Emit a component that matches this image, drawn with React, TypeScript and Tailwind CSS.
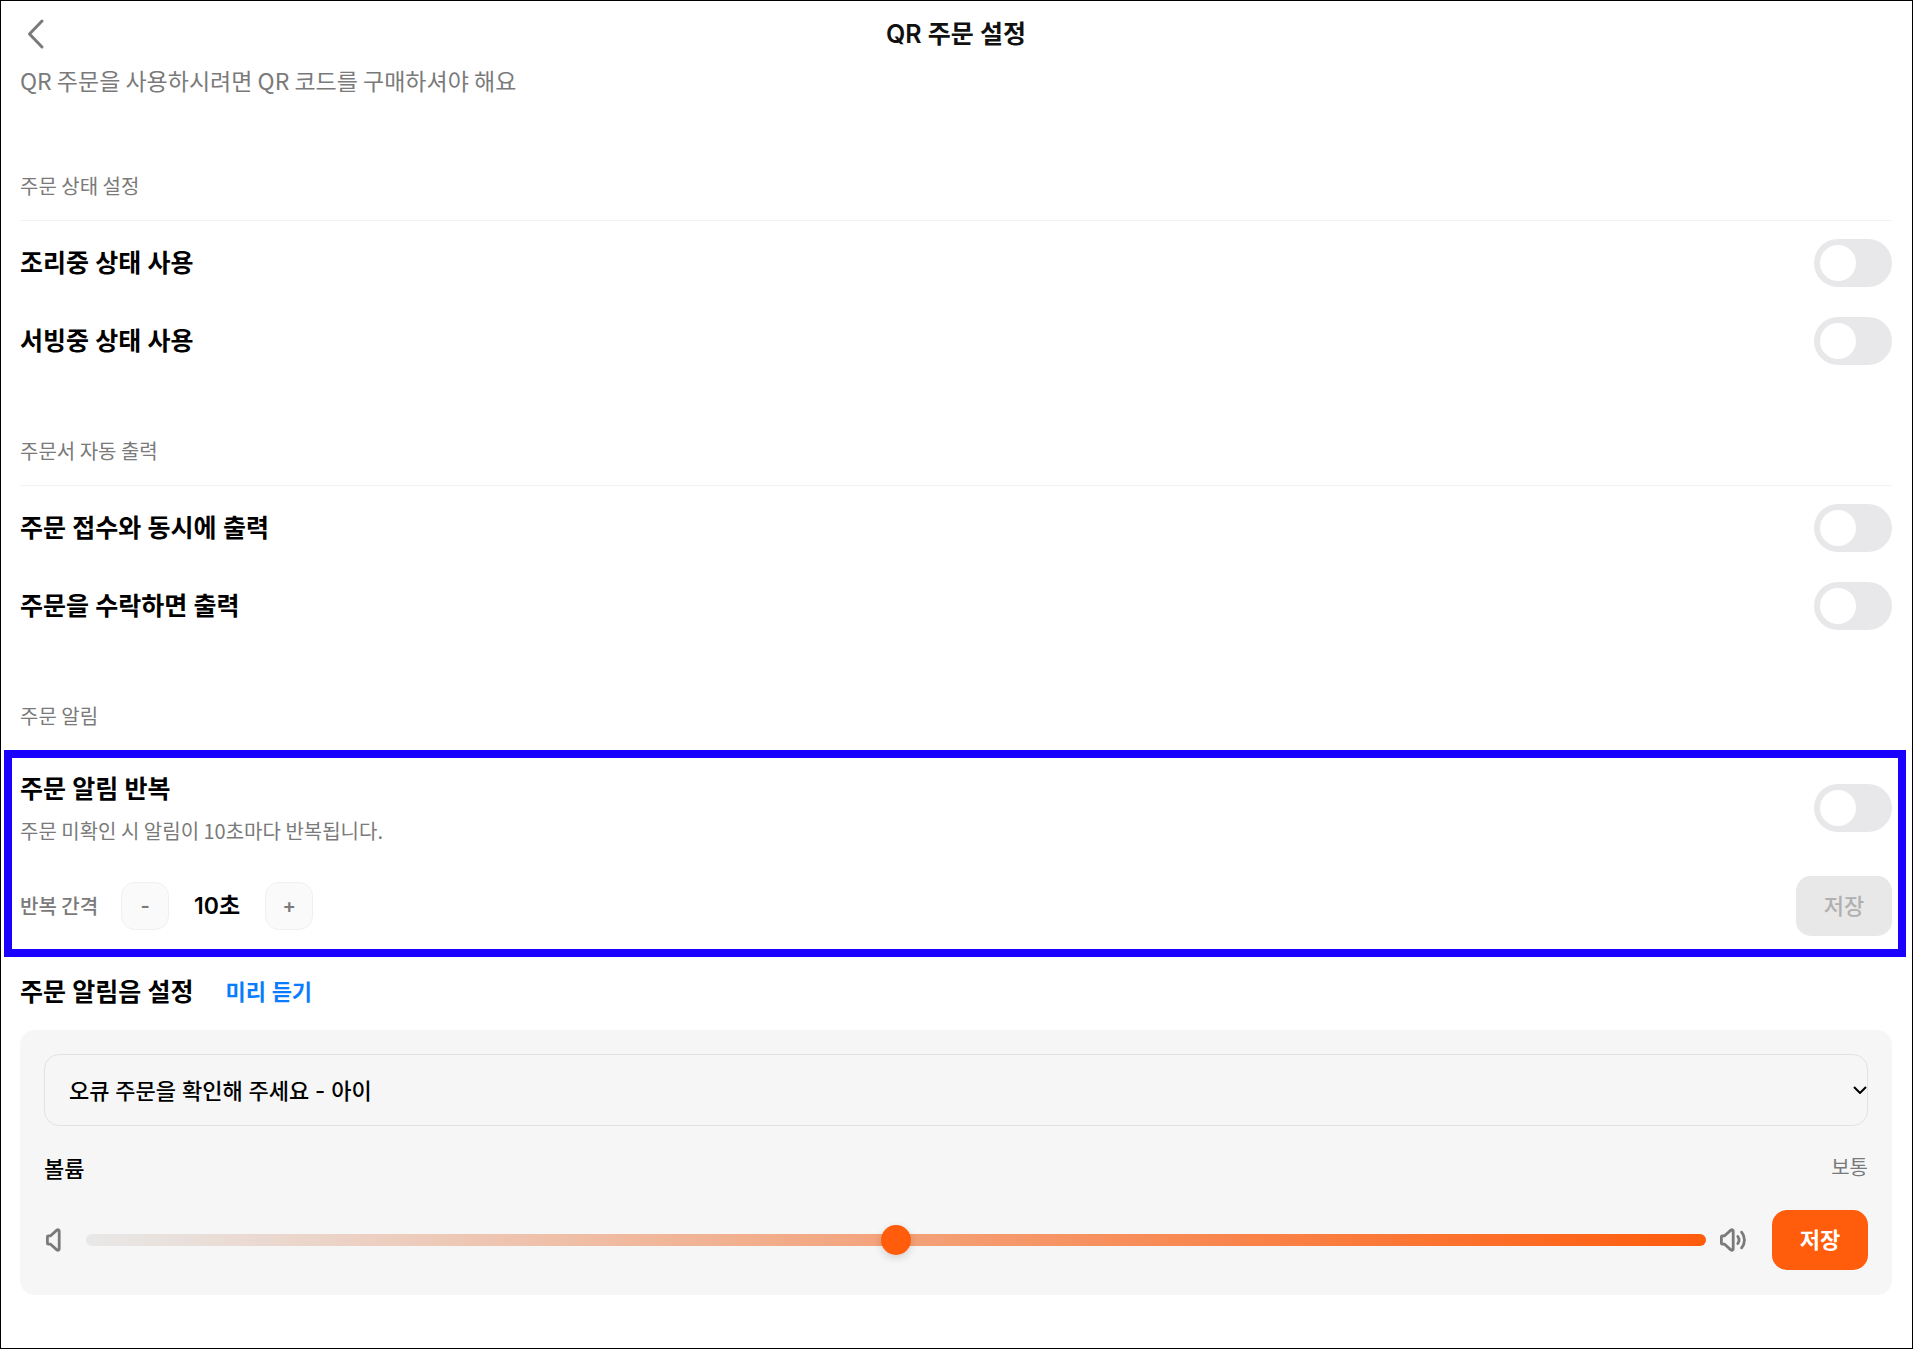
import { useState } from 'react';

interface ToggleRowProps {
  id: string;
  label: string;
}

const inter = "font-['Inter','Noto_Sans_CJK_KR',sans-serif]";

function Toggle({ id }: { id: string }) {
  return (
    <input
      id={id}
      type="checkbox"
      role="switch"
      className="h-12 w-[78px] shrink-0 cursor-pointer appearance-none rounded-full bg-[#e8e8ea] p-1.5 before:block before:size-9 before:rounded-full before:bg-white before:transition-transform checked:bg-[#ff5c0c] checked:before:translate-x-[30px]"
    />
  );
}

function ToggleRow({ id, label }: ToggleRowProps) {
  return (
    <div className="flex items-center justify-between">
      <label htmlFor={id} className={`${inter} text-[25px] leading-9 font-semibold text-black`}>
        {label}
      </label>
      <Toggle id={id} />
    </div>
  );
}

function Section({ title, rows }: { title: string; rows: ToggleRowProps[] }) {
  return (
    <section className="mb-[72px]">
      <h2 className="border-b border-[#f3f3f3] pb-5 text-xl leading-7 text-[#7a7a7a]">{title}</h2>
      <div className="flex flex-col gap-[30px] pt-[18px]">
        {rows.map((row) => (
          <ToggleRow key={row.id} {...row} />
        ))}
      </div>
    </section>
  );
}

function SpeakerIcon({ loud = false }: { loud?: boolean }) {
  return (
    <svg
      viewBox="0 0 30 30"
      className="size-[30px] shrink-0"
      fill="none"
      stroke="#7a7a7a"
      strokeWidth="2.8"
      strokeLinecap="round"
      strokeLinejoin="round"
      aria-hidden="true"
    >
      <path d="M3.4 11.8v6.400c0 .6.400 1 1 1h2.200l6.300 5.700c1 .8 2.300.4 2.300-.8V5.900c0-1.200-1.300-1.600-2.300-.8l-6.300 5.700H4.400c-.6 0-1 .4-1 1z" />
      {loud && (
        <>
          <path d="M19.800 11.500c1.600 2.200 1.600 4.800 0 7" />
          <path d="M23.600 7.200c3.800 4.600 3.800 11 0 15.600" />
        </>
      )}
    </svg>
  );
}

export default function App() {
  const [seconds, setSeconds] = useState(10);
  const [volume, setVolume] = useState(50);

  return (
    <div className="min-h-screen border border-black bg-white pr-5 pl-[19px] font-['Noto_Sans_CJK_KR',sans-serif]">
      <header className="grid h-16 grid-cols-[1fr_auto_1fr] items-center">
        <button type="button" aria-label="뒤로" className="size-9 cursor-pointer">
          <svg viewBox="0 0 36 36" className="size-9" fill="none" stroke="#7a7a7a" strokeWidth="3" strokeLinecap="round" strokeLinejoin="round">
            <path d="M22 6L9.500 19l12.500 13" />
          </svg>
        </button>
        <h1 className={`${inter} pt-0.5 text-[25px] leading-9 font-semibold text-[#111]`}>QR 주문 설정</h1>
      </header>

      <main>
        <p className="mb-[77px] text-[23px] leading-[30px] text-[#7a7a7a]">
          QR 주문을 사용하시려면 QR 코드를 구매하셔야 해요
        </p>

        <Section
          title="주문 상태 설정"
          rows={[
            { id: 'cooking', label: '조리중 상태 사용' },
            { id: 'serving', label: '서빙중 상태 사용' },
          ]}
        />
        <Section
          title="주문서 자동 출력"
          rows={[
            { id: 'print-received', label: '주문 접수와 동시에 출력' },
            { id: 'print-accepted', label: '주문을 수락하면 출력' },
          ]}
        />

        <section>
          <h2 className="pb-5 text-xl leading-7 text-[#7a7a7a]">주문 알림</h2>

          <div className="-mr-3.5 -ml-4 border-8 border-[#1a00ff] py-[13px] pr-1.5 pl-2">
            <div className="flex items-center justify-between">
              <div className="flex flex-col gap-2.5">
                <label htmlFor="repeat" className={`${inter} text-[25px] leading-9 font-semibold text-black`}>
                  주문 알림 반복
                </label>
                <p className="text-xl leading-7 text-[#7a7a7a]">주문 미확인 시 알림이 10초마다 반복됩니다.</p>
              </div>
              <Toggle id="repeat" />
            </div>

            <div className="mt-[31px] flex items-center">
              <span className="text-xl leading-7 font-medium text-[#7a7a7a]">반복 간격</span>
              <button
                type="button"
                aria-label="간격 줄이기"
                onClick={() => setSeconds(Math.max(5, seconds - 5))}
                className={`${inter} ml-[23px] size-12 cursor-pointer rounded-[14px] border border-[#f0f0f0] bg-[#fafafa] text-xl font-semibold text-[#7a7a7a]`}
              >
                -
              </button>
              <output className={`${inter} w-24 text-center text-[23px] leading-8 font-semibold text-black`}>
                {seconds}초
              </output>
              <button
                type="button"
                aria-label="간격 늘리기"
                onClick={() => setSeconds(seconds + 5)}
                className={`${inter} size-12 cursor-pointer rounded-[14px] border border-[#f0f0f0] bg-[#fafafa] text-xl font-semibold text-[#7a7a7a]`}
              >
                +
              </button>
              <button type="button" disabled className="ml-auto h-[60px] w-24 rounded-[15px] bg-[#e8e8e8] pb-1 text-[22px] font-medium text-[#b0b0b0]">
                저장
              </button>
            </div>
          </div>

          <div className="mt-[17px] flex items-center gap-8">
            <h3 className={`${inter} text-[25px] leading-9 font-semibold text-black`}>주문 알림음 설정</h3>
            <button type="button" className={`${inter} cursor-pointer text-[22px] leading-8 font-semibold text-[#0a7cff]`}>
              미리 듣기
            </button>
          </div>

          <div className="mt-5 rounded-[15px] bg-[#f6f6f6] px-6 pt-6 pb-[25px]">
            <div className="relative">
              <select
                aria-label="주문 알림음"
                className={`${inter} block h-[72px] w-full appearance-none rounded-[15px] border border-[#e2e2e2] bg-transparent pt-0.5 pr-12 pl-6 text-[22px] font-medium text-black`}
              >
                <option>오큐 주문을 확인해 주세요 - 아이</option>
              </select>
              <svg viewBox="0 0 14 8" className="pointer-events-none absolute top-8 right-px h-2 w-3.5" fill="none" stroke="#000" strokeWidth="2">
                <path d="M1 1l6 6 6-6" />
              </svg>
            </div>

            <div className="mt-[25px] flex items-center justify-between">
              <label htmlFor="volume" className="text-[22px] leading-8 font-medium text-black">볼륨</label>
              <span className="text-xl leading-8 text-[#7a7a7a]">보통</span>
            </div>

            <div className="mt-[27px] flex items-center gap-3">
              <SpeakerIcon />
              <input
                id="volume"
                type="range"
                value={volume}
                onChange={(e) => setVolume(Number(e.target.value))}
                className="h-3 min-w-0 flex-1 cursor-pointer appearance-none rounded-full bg-linear-to-r/srgb from-[#e8e8e8] to-[#ff5c0c] [&::-webkit-slider-thumb]:size-[30px] [&::-webkit-slider-thumb]:appearance-none [&::-webkit-slider-thumb]:rounded-full [&::-webkit-slider-thumb]:bg-[#ff5c0c] [&::-webkit-slider-thumb]:shadow-[0_3px_8px_rgba(0,0,0,0.15)]"
              />
              <SpeakerIcon loud />
              <button type="button" className="ml-3 h-[60px] w-24 cursor-pointer rounded-[15px] bg-[#ff5c0c] pb-1 text-[22px] font-semibold text-white">
                저장
              </button>
            </div>
          </div>
        </section>
      </main>
    </div>
  );
}
